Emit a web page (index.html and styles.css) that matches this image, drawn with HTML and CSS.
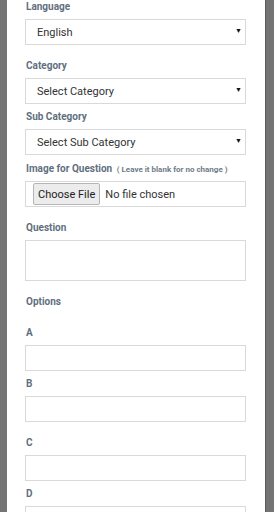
FILE: index.html
```html
<!DOCTYPE html>
<html lang="en">
<head>
    <meta charset="UTF-8">
    <meta name="viewport" content="width=device-width, initial-scale=1.0">
    <title>Edit Question</title>
    <link rel="stylesheet" href="styles.css">
</head>
<body>
    <div class="panel">
        <form class="question-form">
            <label class="field-label" for="language">Language</label>
            <div class="select-wrap">
                <select id="language" class="input-field">
                    <option>English</option>
                </select>
            </div>

            <label class="field-label gap-lg" for="category">Category</label>
            <div class="select-wrap">
                <select id="category" class="input-field">
                    <option>Select Category</option>
                </select>
            </div>

            <label class="field-label gap-sm" for="subcategory">Sub Category</label>
            <div class="select-wrap">
                <select id="subcategory" class="input-field">
                    <option>Select Sub Category</option>
                </select>
            </div>

            <label class="field-label gap-md" for="image">Image for Question <small class="hint">( Leave it blank for no change )</small></label>
            <div class="file-box">
                <input type="file" id="image" class="file-input">
            </div>

            <label class="field-label gap-lg" for="question">Question</label>
            <textarea id="question" class="input-field text-area"></textarea>

            <div class="field-label gap-lg">Options</div>

            <label class="field-label gap-xl" for="optA">A</label>
            <input type="text" id="optA" class="input-field">

            <label class="field-label gap-sm" for="optB">B</label>
            <input type="text" id="optB" class="input-field">

            <label class="field-label gap-lg" for="optC">C</label>
            <input type="text" id="optC" class="input-field">

            <label class="field-label gap-sm" for="optD">D</label>
            <input type="text" id="optD" class="input-field">
        </form>
    </div>
</body>
</html>
```

FILE: styles.css
```css
html, body {
    margin: 0;
    padding: 0;
    background-color: #747474;
    font-family: Roboto, "Liberation Sans", Arial, sans-serif;
}

.panel {
    background-color: #fff;
    margin: 0 9px 0 7px;
    padding: 0 19px 0 18px;
    min-height: 512px;
    box-sizing: border-box;
    box-shadow: 1px 0 0 #5a5a5a;
}

.question-form {
    display: flex;
    flex-direction: column;
}

.field-label {
    display: block;
    flex-shrink: 0;
    height: 14px;
    font-size: 10px;
    font-weight: bold;
    line-height: 14px;
    color: #5f6f80;
    margin: 0 0 5px 1px;
    white-space: nowrap;
}

.gap-sm { margin-top: 6px; }
.gap-md { margin-top: 7px; }
.gap-lg { margin-top: 14px; }
.gap-xl { margin-top: 12px; }

.hint {
    font-size: 8px;
    font-weight: bold;
    color: #6f7c8a;
    margin-left: 2px;
}

.input-field {
    display: block;
    flex-shrink: 0;
    width: 100%;
    height: 26px;
    box-sizing: border-box;
    border: 1px solid #d9d9d9;
    border-radius: 0;
    background-color: #fff;
    font-family: inherit;
    font-size: 11px;
    color: #333;
    padding: 0 11px;
    margin: 0;
    outline: none;
}

select.input-field {
    -webkit-appearance: none;
    appearance: none;
}

.select-wrap {
    position: relative;
}

.select-wrap::after {
    content: "\25BC";
    position: absolute;
    right: 4px;
    top: 8px;
    font-size: 7px;
    color: #111;
    pointer-events: none;
}

.text-area {
    height: 41px;
    resize: none;
}

.file-box {
    display: flex;
    align-items: center;
    flex-shrink: 0;
    height: 26px;
    box-sizing: border-box;
    border: 1px solid #d9d9d9;
    padding: 0 7px;
}

.file-input {
    font-family: inherit;
    font-size: 11px;
    color: #333;
}

.file-input::file-selector-button {
    font-family: inherit;
    font-size: 11px;
    color: #222;
    height: 22px;
    padding: 0 4px;
    margin-right: 5px;
    border: 1px solid #b5b5b5;
    border-radius: 2px;
    background-color: #ececec;
}
```
